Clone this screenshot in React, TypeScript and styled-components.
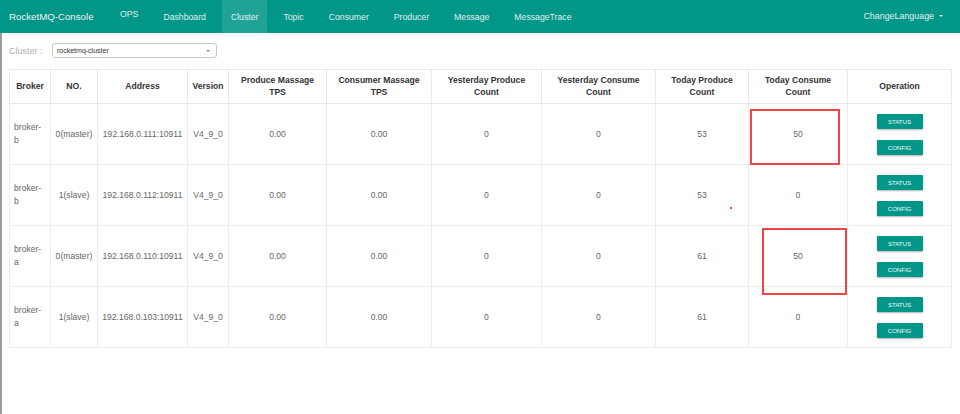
import React from "react";
import styled, { createGlobalStyle } from "styled-components";

const GlobalStyle = createGlobalStyle`
  html, body {
    margin: 0;
    padding: 0;
    background: #fff;
    font-family: "Liberation Sans", Arial, sans-serif;
  }
  * {
    box-sizing: border-box;
  }
`;

const Navbar = styled.nav`
  display: flex;
  align-items: stretch;
  height: 33px;
  background-color: #009688;
  padding-left: 9px;
`;
const Brand = styled.div`
  display: flex;
  align-items: center;
  color: #f2f2f2;
  font-size: 9.7px;
  margin-right: 14px;
`;
const NavItem = styled.div<{ $active?: boolean; $raised?: boolean }>`
  display: flex;
  align-items: center;
  padding: 0 9px ${(p) => (p.$raised ? "6px" : "0")};
  margin: 0 3.5px;
  font-size: 8.7px;
  color: #e0f0ee;
  background-color: ${(p) => (p.$active ? "#1ea396" : "transparent")};
`;
const NavRight = styled.div`
  margin-left: auto;
  display: flex;
  align-items: center;
  padding: 0 17px 0 0;
  margin-bottom: 2px;
  font-size: 8.9px;
  color: #e0f0ee;
`;
const Caret = styled.span`
  display: inline-block;
  margin-left: 5px;
  border-left: 2.5px solid transparent;
  border-right: 2.5px solid transparent;
  border-top: 2.5px solid #e0f0ee;
`;

const Main = styled.main`
  min-height: calc(100vh - 33px);
  border-left: 2px solid #9a9a9a;
  padding: 10px 7px 0 7px;
`;
const FilterBar = styled.div`
  display: flex;
  align-items: center;
  height: 15px;
  margin-bottom: 11px;
`;
const FilterLabel = styled.span`
  font-size: 9px;
  color: #b0b0b0;
  width: 43px;
`;
const SelectBox = styled.div`
  display: flex;
  align-items: center;
  justify-content: space-between;
  width: 165px;
  height: 15px;
  padding: 0 6px 0 4px;
  border: 1px solid #c8c8c8;
  border-radius: 3px;
  font-size: 7px;
  color: #333;
`;
const SelectCaret = styled.span`
  border-left: 2px solid transparent;
  border-right: 2px solid transparent;
  border-top: 2.5px solid #888;
`;

const Table = styled.table`
  width: 942px;
  table-layout: fixed;
  border-collapse: collapse;
  border: 1px solid #e3e3e3;
`;
const Th = styled.th`
  border: 1px solid #e8e8e8;
  padding: 5px 4px;
  font-size: 8.6px;
  line-height: 11.5px;
  font-weight: bold;
  color: #333;
  text-align: center;
  vertical-align: middle;
`;
const Td = styled.td<{ $left?: boolean }>`
  position: relative;
  border: 1px solid #ececec;
  padding: ${(p) => (p.$left ? "5px 8px 5px 4px" : "5px 4px")};
  font-size: 8.6px;
  line-height: 13px;
  color: #666;
  text-align: ${(p) => (p.$left ? "left" : "center")};
  vertical-align: middle;
  word-wrap: break-word;
`;
const Ops = styled.div`
  display: flex;
  flex-direction: column;
  align-items: center;
  gap: 11px;
  padding: 5px 0 4px;
`;
const OpButton = styled.button`
  width: 46px;
  height: 15px;
  padding: 0;
  border: none;
  border-radius: 1px;
  background-color: #009688;
  color: #f4fbfa;
  font-family: "Liberation Sans", Arial, sans-serif;
  font-size: 6.2px;
  letter-spacing: -0.1px;
  box-shadow: 0 1px 2px rgba(0, 0, 0, 0.3);
`;
const Highlight = styled.div<{ $left: number; $top: number; $w: number; $h: number }>`
  position: absolute;
  left: ${(p) => p.$left}px;
  top: ${(p) => p.$top}px;
  width: ${(p) => p.$w}px;
  height: ${(p) => p.$h}px;
  border: 2px solid #ee4646;
  pointer-events: none;
  z-index: 2;
`;
const Speck = styled.span`
  position: absolute;
  left: 74px;
  top: 42px;
  width: 2px;
  height: 2px;
  background: #f04848;
`;

const columns: [string, number][] = [
  ["Broker", 41],
  ["NO.", 47],
  ["Address", 90],
  ["Version", 41],
  ["Produce Massage TPS", 98],
  ["Consumer Massage TPS", 105],
  ["Yesterday Produce Count", 110],
  ["Yesterday Consume Count", 114],
  ["Today Produce Count", 93],
  ["Today Consume Count", 99],
  ["Operation", 104],
];

interface Row {
  broker: string;
  no: string;
  address: string;
  produce: number;
  consume: number;
  box?: { left: number; top: number; w: number; h: number };
  speck?: boolean;
}

const rows: Row[] = [
  { broker: "broker-b", no: "0(master)", address: "192.168.0.111:10911", produce: 53, consume: 50, box: { left: 1, top: 5, w: 90, h: 56 } },
  { broker: "broker-b", no: "1(slave)", address: "192.168.0.112:10911", produce: 53, consume: 0, speck: true },
  { broker: "broker-a", no: "0(master)", address: "192.168.0.110:10911", produce: 61, consume: 50, box: { left: 13, top: 2, w: 85, h: 67 } },
  { broker: "broker-a", no: "1(slave)", address: "192.168.0.103:10911", produce: 61, consume: 0 },
];

const navItems = ["Dashboard", "Cluster", "Topic", "Consumer", "Producer", "Message", "MessageTrace"];

const App: React.FunctionComponent = () => {
  return (
    <>
      <GlobalStyle />
      <Navbar>
        <Brand>RocketMQ-Console</Brand>
        <NavItem $raised>OPS</NavItem>
        {navItems.map((item) => (
          <NavItem key={item} $active={item === "Cluster"}>
            {item}
          </NavItem>
        ))}
        <NavRight>
          ChangeLanguage
          <Caret />
        </NavRight>
      </Navbar>
      <Main>
        <FilterBar>
          <FilterLabel>Cluster :</FilterLabel>
          <SelectBox>
            rocketmq-cluster
            <SelectCaret />
          </SelectBox>
        </FilterBar>
        <Table>
          <colgroup>
            {columns.map(([name, w]) => (
              <col key={name} style={{ width: w }} />
            ))}
          </colgroup>
          <thead>
            <tr>
              {columns.map(([name]) => (
                <Th key={name}>{name}</Th>
              ))}
            </tr>
          </thead>
          <tbody>
            {rows.map((r) => (
              <tr key={r.address}>
                <Td $left>{r.broker}</Td>
                <Td>{r.no}</Td>
                <Td>{r.address}</Td>
                <Td>V4_9_0</Td>
                <Td>0.00</Td>
                <Td>0.00</Td>
                <Td>0</Td>
                <Td>0</Td>
                <Td>
                  {r.produce}
                  {r.speck && <Speck />}
                </Td>
                <Td>
                  {r.consume}
                  {r.box && (
                    <Highlight $left={r.box.left} $top={r.box.top} $w={r.box.w} $h={r.box.h} />
                  )}
                </Td>
                <Td>
                  <Ops>
                    <OpButton>STATUS</OpButton>
                    <OpButton>CONFIG</OpButton>
                  </Ops>
                </Td>
              </tr>
            ))}
          </tbody>
        </Table>
      </Main>
    </>
  );
};

export default App;
